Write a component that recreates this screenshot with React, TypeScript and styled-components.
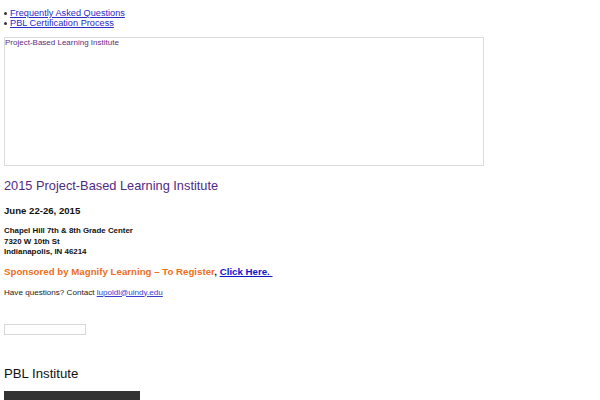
import React from "react";
import styled, { createGlobalStyle } from "styled-components";

const Global = createGlobalStyle`
  html, body { margin: 0; padding: 0; background: #fff; }
  body { font-family: "Liberation Sans", Arial, sans-serif; color: #222; }
`;

const Page = styled.div`
  padding: 8px 4px 0 4px;
  display: flex;
  flex-direction: column;
  align-items: flex-start;
`;

const LinkList = styled.ul`
  margin: 0;
  padding: 0;
  list-style: none;
  font-size: 9.2px;
  line-height: 10px;
`;

const ListItem = styled.li`
  display: flex;
  align-items: center;
  &::before {
    content: "";
    width: 3px;
    height: 3px;
    margin: 0 3px 0 0;
    border-radius: 50%;
    background: #333;
  }
`;

const ListLink = styled.a`
  color: #2b2bc8;
  text-decoration: underline;
`;

const FrameBox = styled.div`
  margin-top: 9px;
  width: 478px;
  height: 127px;
  border: 1px solid #dcdcdc;
  color: #5b2d86;
  font-size: 8px;
  line-height: 9px;
  box-sizing: content-box;
`;

const Title = styled.h1`
  margin: 13px 0 0 0;
  font-size: 12.8px;
  font-weight: normal;
  color: #512a84;
  line-height: 14px;
`;

const DateLine = styled.h2`
  margin: 12px 0 0 0;
  font-size: 9.6px;
  font-weight: bold;
  color: #111;
  line-height: 12px;
`;

const Address = styled.p`
  margin: 9px 0 0 0;
  font-size: 7.9px;
  font-weight: bold;
  color: #111;
  line-height: 10.5px;
`;

const Sponsor = styled.p`
  margin: 8px 0 0 0;
  font-size: 9.7px;
  font-weight: bold;
  color: #ec6f1d;
  line-height: 12px;
`;

const Dark = styled.span`
  color: #111;
`;

const StrongLink = styled.a`
  color: #1414c8;
  text-decoration: underline;
`;

const Contact = styled.p`
  margin: 10px 0 0 0;
  font-size: 8.1px;
  color: #222;
  line-height: 10px;
`;

const MailLink = styled.a`
  color: #3a3ad0;
  text-decoration: underline;
`;

const SearchInput = styled.input`
  margin: 26px 0 0 0;
  width: 80px;
  height: 9px;
  border: 1px solid #d8d8d8;
  padding: 0;
  box-sizing: content-box;
  outline: none;
`;

const SectionTitle = styled.h3`
  margin: 32px 0 0 0;
  font-size: 13.2px;
  font-weight: normal;
  color: #111;
  line-height: 14px;
`;

const DarkBar = styled.div`
  margin-top: 10px;
  width: 136px;
  height: 20px;
  background: #333;
`;

export default function App() {
  return (
    <>
      <Global />
      <Page>
        <LinkList>
          <ListItem><ListLink href="#">Frequently Asked Questions</ListLink></ListItem>
          <ListItem><ListLink href="#">PBL Certification Process</ListLink></ListItem>
        </LinkList>
        <FrameBox>Project-Based Learning Institute</FrameBox>
        <Title>2015 Project-Based Learning Institute</Title>
        <DateLine>June 22-26, 2015</DateLine>
        <Address>
          Chapel Hill 7th &amp; 8th Grade Center<br />
          7320 W 10th St<br />
          Indianapolis, IN 46214
        </Address>
        <Sponsor>
          Sponsored by Magnify Learning – To Register<Dark>,</Dark>{" "}
          <StrongLink href="#">Click Here.&nbsp;</StrongLink>
        </Sponsor>
        <Contact>
          Have questions? Contact <MailLink href="#">lupoldl@uindy.edu</MailLink>
        </Contact>
        <SearchInput type="text" />
        <SectionTitle>PBL Institute</SectionTitle>
        <DarkBar />
      </Page>
    </>
  );
}
